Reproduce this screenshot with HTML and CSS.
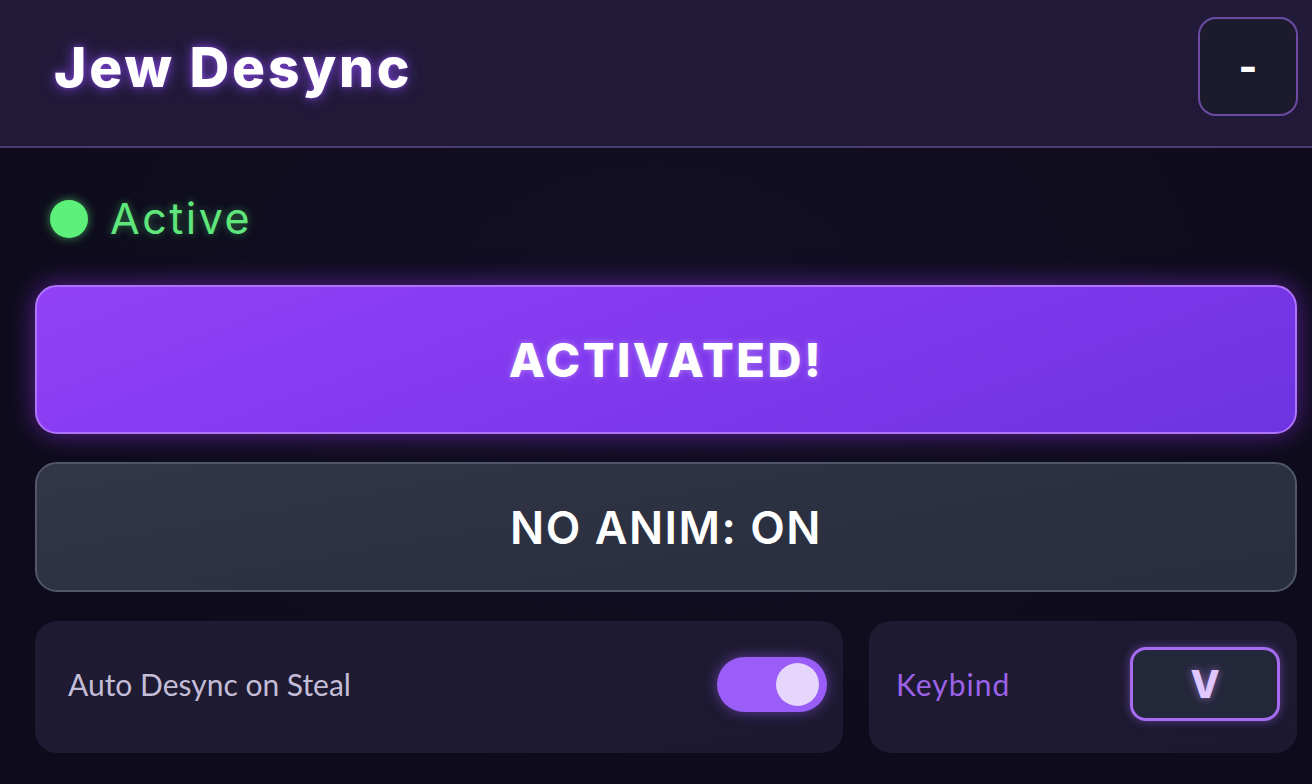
FILE: index.html
```html
<!DOCTYPE html>
<html>
<head>
<meta charset="utf-8">
<link rel="stylesheet" href="styles.css">
</head>
<body>
<div class="app">
  <header class="header">
    <h1 class="title">Jew Desync</h1>
    <button class="min-btn">-</button>
  </header>
  <main class="main">
    <div class="status">
      <span class="dot"></span>
      <span class="status-text">Active</span>
    </div>
    <button class="btn btn-primary">ACTIVATED!</button>
    <button class="btn btn-secondary">NO ANIM: ON</button>
    <div class="row">
      <div class="card card-toggle">
        <span class="card-label">Auto Desync on Steal</span>
        <span class="toggle"><span class="knob"></span></span>
      </div>
      <div class="card card-key">
        <span class="key-label">Keybind</span>
        <span class="key">V</span>
      </div>
    </div>
  </main>
</div>
</body>
</html>
```
FILE: styles.css
```css
* { box-sizing: border-box; }
html, body {
  margin: 0;
  padding: 0;
  width: 1312px;
  height: 784px;
  overflow: hidden;
  background: #0f0d1f;
  font-family: "Inter", "Open Sans", sans-serif;
}
.app {
  width: 1312px;
  height: 784px;
  display: flex;
  flex-direction: column;
  background: radial-gradient(ellipse at 50% 40%, #120f24 0%, #0e0c1c 70%);
}
.header {
  height: 148px;
  flex: none;
  display: flex;
  align-items: center;
  justify-content: space-between;
  padding: 0 14px 0 54px;
  background: linear-gradient(180deg, #211a38 0%, #201938 100%);
  border-bottom: 2px solid #4b3d6c;
}
.title {
  margin: 0;
  margin-top: -12px;
  color: #ffffff;
  font-family: "Inter", sans-serif;
  font-weight: 800;
  font-size: 55px;
  letter-spacing: 2.8px;
  text-shadow: 0 0 14px rgba(150, 80, 255, 0.75), 0 0 4px rgba(150, 80, 255, 0.5);
}
.min-btn {
  width: 100px;
  height: 99px;
  margin-top: -14px;
  border-radius: 18px;
  border: 2px solid #6c4aa3;
  background: #1c1a2d;
  color: #ffffff;
  font-family: "Inter", sans-serif;
  font-weight: 800;
  font-size: 40px;
  padding: 0;
  display: flex;
  align-items: center;
  justify-content: center;
}
.main {
  flex: 1;
  display: flex;
  flex-direction: column;
  padding: 51px 15px 0 35px;
}
.status {
  height: 40px;
  display: flex;
  align-items: center;
  gap: 22px;
  padding-left: 15px;
}
.dot {
  width: 38px;
  height: 38px;
  border-radius: 50%;
  background: #5df07b;
  box-shadow: 0 0 10px rgba(93, 240, 123, 0.6);
}
.status-text {
  color: #5fe77c;
  font-family: "Inter", sans-serif;
  font-size: 43px;
  font-weight: 400;
  letter-spacing: 2.5px;
  text-shadow: 0 0 8px rgba(93, 240, 123, 0.45);
  margin-top: -2px;
}
.btn {
  width: 100%;
  border-radius: 22px;
  font-family: "Inter", sans-serif;
  color: #ffffff;
  display: flex;
  align-items: center;
  justify-content: center;
  padding: 0;
}
.btn-primary {
  margin-top: 46px;
  height: 149px;
  background: linear-gradient(160deg, #9241f6 0%, #8039ee 50%, #6d34e0 100%);
  border: 2px solid #b073fb;
  box-shadow: 0 0 26px rgba(150, 50, 240, 0.55);
  font-weight: 800;
  font-size: 47px;
  letter-spacing: 2.5px;
  text-shadow: 0 0 6px rgba(255, 255, 255, 0.35);
}
.btn-secondary {
  margin-top: 28px;
  height: 130px;
  background: linear-gradient(170deg, #333548 0%, #2c3142 50%, #282e3f 100%);
  border: 2px solid #51566a;
  font-weight: 600;
  font-size: 45px;
  letter-spacing: 1.5px;
}
.row {
  margin-top: 29px;
  height: 132px;
  display: flex;
  gap: 26px;
}
.card {
  border-radius: 22px;
  background: linear-gradient(170deg, #1f1b33 0%, #1c1930 100%);
  display: flex;
  align-items: center;
  justify-content: space-between;
  padding-bottom: 6px;
}
.card-toggle {
  width: 808px;
  padding-left: 33px;
  padding-right: 16px;
}
.card-key {
  flex: 1;
  padding-left: 27px;
  padding-right: 17px;
}
.card-label {
  color: #c3bdd7;
  font-family: "Lato", sans-serif;
  font-size: 30px;
  font-weight: 400;
}
.toggle {
  width: 110px;
  height: 55px;
  border-radius: 28px;
  background: #9a5df7;
  box-shadow: 0 0 14px rgba(150, 90, 245, 0.55);
  display: flex;
  align-items: center;
  justify-content: flex-end;
  padding-right: 8px;
}
.knob {
  width: 43px;
  height: 43px;
  border-radius: 50%;
  background: #e6d6fb;
}
.key-label {
  color: #9d62ea;
  font-family: "Lato", sans-serif;
  font-size: 30px;
  letter-spacing: 1px;
}
.key {
  width: 150px;
  height: 74px;
  border-radius: 16px;
  border: 3px solid #a56cf2;
  background: #24263a;
  box-shadow: 0 0 10px rgba(160, 100, 240, 0.5);
  color: #dfc7ff;
  font-family: "Inter", sans-serif;
  font-weight: 800;
  font-size: 38px;
  display: flex;
  align-items: center;
  justify-content: center;
  text-shadow: 0 0 8px rgba(200, 150, 255, 0.6);
}
```
